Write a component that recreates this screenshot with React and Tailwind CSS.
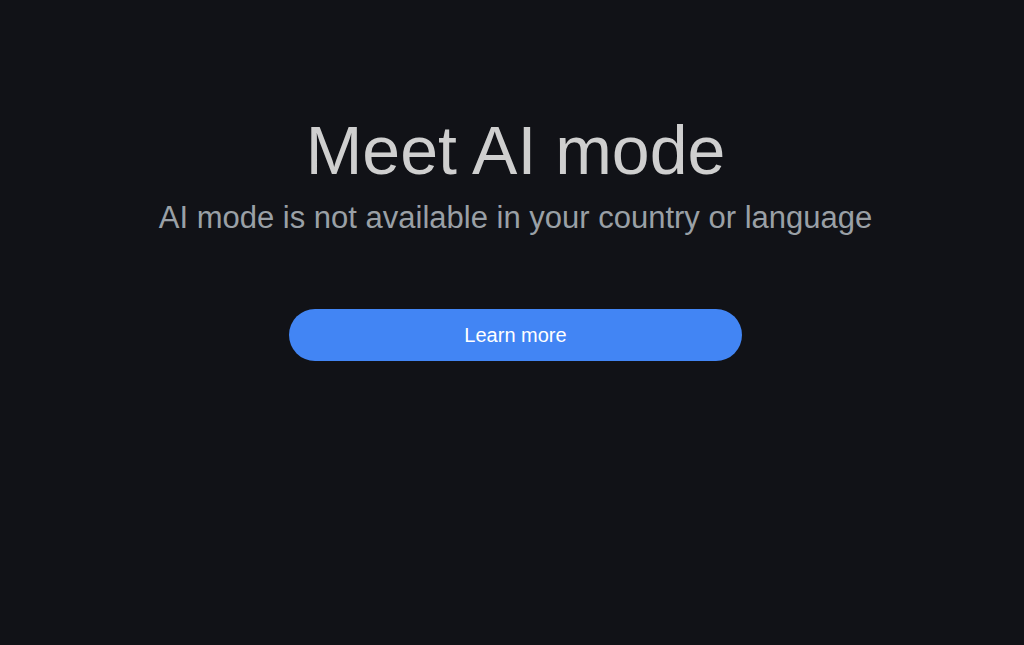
export default function App() {
  return (
    <div
      className="min-h-[645px] w-full bg-[#111217] flex flex-col items-center pt-[116px] pl-[7px]"
      style={{ fontFamily: '"Liberation Sans", Arial, sans-serif' }}
    >
      <h1 className="text-[68px] leading-[68px] text-[#cfcfcf] font-normal">Meet AI mode</h1>
      <p className="mt-[18px] text-[31px] leading-[31px] text-[#9aa0a6]">
        AI mode is not available in your country or language
      </p>
      <button
        type="button"
        className="mt-[76px] w-[453px] h-[52px] rounded-full bg-[#4285f4] text-white text-[20px]"
      >
        Learn more
      </button>
    </div>
  );
}
